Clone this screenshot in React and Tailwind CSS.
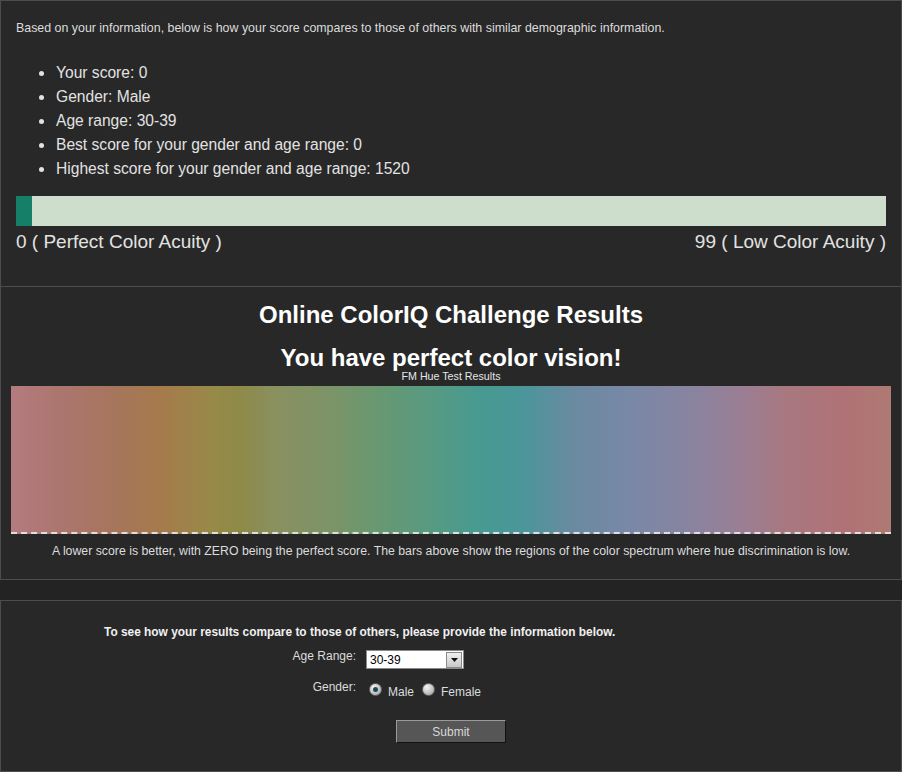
import React from 'react';

const items = [
  'Your score: 0',
  'Gender: Male',
  'Age range: 30-39',
  'Best score for your gender and age range: 0',
  'Highest score for your gender and age range: 1520',
];

const Radio = ({ checked }) => (
  <span className="inline-flex items-center justify-center w-[13px] h-[13px] rounded-full bg-[radial-gradient(circle_at_35%_30%,#f4f4f4,#9a9a9a)] border border-[#6a6a6a]">
    {checked && <span className="w-[5px] h-[5px] rounded-full bg-[#1f4a55]" />}
  </span>
);

export default function App() {
  return (
    <div className="w-[902px] font-['Liberation_Sans',Arial,sans-serif] bg-[#282828]">
      {/* Score summary */}
      <div className="h-[287px] border border-[#4d4d4d] bg-[#282828] px-[15px] pt-[19px]">
        <p className="text-[12.4px] leading-[16px] text-[#dcdcdc]">
          Based on your information, below is how your score compares to those of others with similar demographic information.
        </p>
        <ul className="mt-[25px]">
          {items.map((t) => (
            <li key={t} className="flex items-center h-[24px] text-[15.6px] text-[#e2e2e2]">
              <span className="ml-[23px] mr-[12px] w-[5px] h-[5px] rounded-full bg-[#e2e2e2]" />
              {t}
            </li>
          ))}
        </ul>
        <div className="mt-[15px] h-[30px] w-[870px] bg-[#cddecd] flex">
          <div className="w-[16px] h-full bg-[#157f68]" />
        </div>
        <div className="mt-[5px] w-[870px] flex justify-between text-[19px] leading-[22px] text-[#e2e2e2]">
          <span>0 ( Perfect Color Acuity )</span>
          <span>99 ( Low Color Acuity )</span>
        </div>
      </div>

      {/* Results */}
      <div className="h-[293px] border-x border-b border-[#4d4d4d] bg-[#282828] pt-[14px] flex flex-col items-center">
        <h1 className="text-[24px] leading-[28px] font-bold text-white">Online ColorIQ Challenge Results</h1>
        <h2 className="mt-[19px] text-[24px] leading-[20px] font-bold text-white">You have perfect color vision!</h2>
        <div className="mt-[2px] text-[10.7px] leading-[12px] text-[#e6e6e6]">FM Hue Test Results</div>
        <div className="mt-[4px] w-[880px] h-[148px] border-b-2 border-dashed border-[#e0e0e0] bg-[linear-gradient(90deg,#b47c80_0%,#ac7670_5%,#a6755c_12%,#a67a4c_17%,#978a48_23%,#8e8a48_26%,#8a9060_30%,#7a9468_37%,#6a9870_41%,#579a82_48%,#489a90_53%,#4a969a_58%,#6a8aa0_64%,#7888a6_70%,#8884a0_77%,#9a7e94_83%,#a87880_88%,#b07276_95%,#ae7a72_100%)]" />
        <p className="mt-[10px] text-[12.3px] leading-[14px] text-[#dcdcdc]">
          A lower score is better, with ZERO being the perfect score. The bars above show the regions of the color spectrum where hue discrimination is low.
        </p>
      </div>

      <div className="h-[20px] bg-[#232323]" />

      {/* Demographic form */}
      <div className="h-[172px] border border-[#4d4d4d] bg-[#282828] pt-[24px]">
        <p className="ml-[103px] text-[11.9px] leading-[15px] font-bold text-[#f0f0f0]">
          To see how your results compare to those of others, please provide the information below.
        </p>
        <div className="mt-[10px] flex items-start">
          <span className="w-[355px] text-right text-[12px] leading-[12px] text-[#dcdcdc]">Age Range:</span>
          <div className="ml-[10px] w-[98px] h-[19px] bg-white border border-[#8a8a8a] flex items-center">
            <span className="flex-1 pl-[3px] text-[12px] text-black">30-39</span>
            <span className="w-[16px] h-[16px] mr-px bg-[linear-gradient(#f0f0f0,#c8c8c8)] border border-[#8a8a8a] flex items-center justify-center">
              <svg width="7" height="4" viewBox="0 0 7 4"><path d="M0 0h7L3.5 4z" fill="#111" /></svg>
            </span>
          </div>
        </div>
        <div className="mt-[14px] h-[14px] flex items-start">
          <span className="w-[355px] text-right text-[12px] leading-[14px] text-[#dcdcdc] -mt-[3px]">Gender:</span>
          <span className="ml-[13px] flex"><Radio checked /></span>
          <span className="ml-[6px] mt-[2px] text-[12px] leading-[14px] text-[#dcdcdc]">Male</span>
          <span className="ml-[8px] flex"><Radio /></span>
          <span className="ml-[6px] mt-[2px] text-[12px] leading-[14px] text-[#dcdcdc]">Female</span>
        </div>
        <div className="mt-[23px] flex">
          <button className="ml-[395px] w-[110px] h-[23px] bg-[#565656] border border-t-[#9a9a9a] border-l-[#9a9a9a] border-b-[#111] border-r-[#111] text-[12px] text-[#d8d8d8]">
            Submit
          </button>
        </div>
      </div>
    </div>
  );
}
